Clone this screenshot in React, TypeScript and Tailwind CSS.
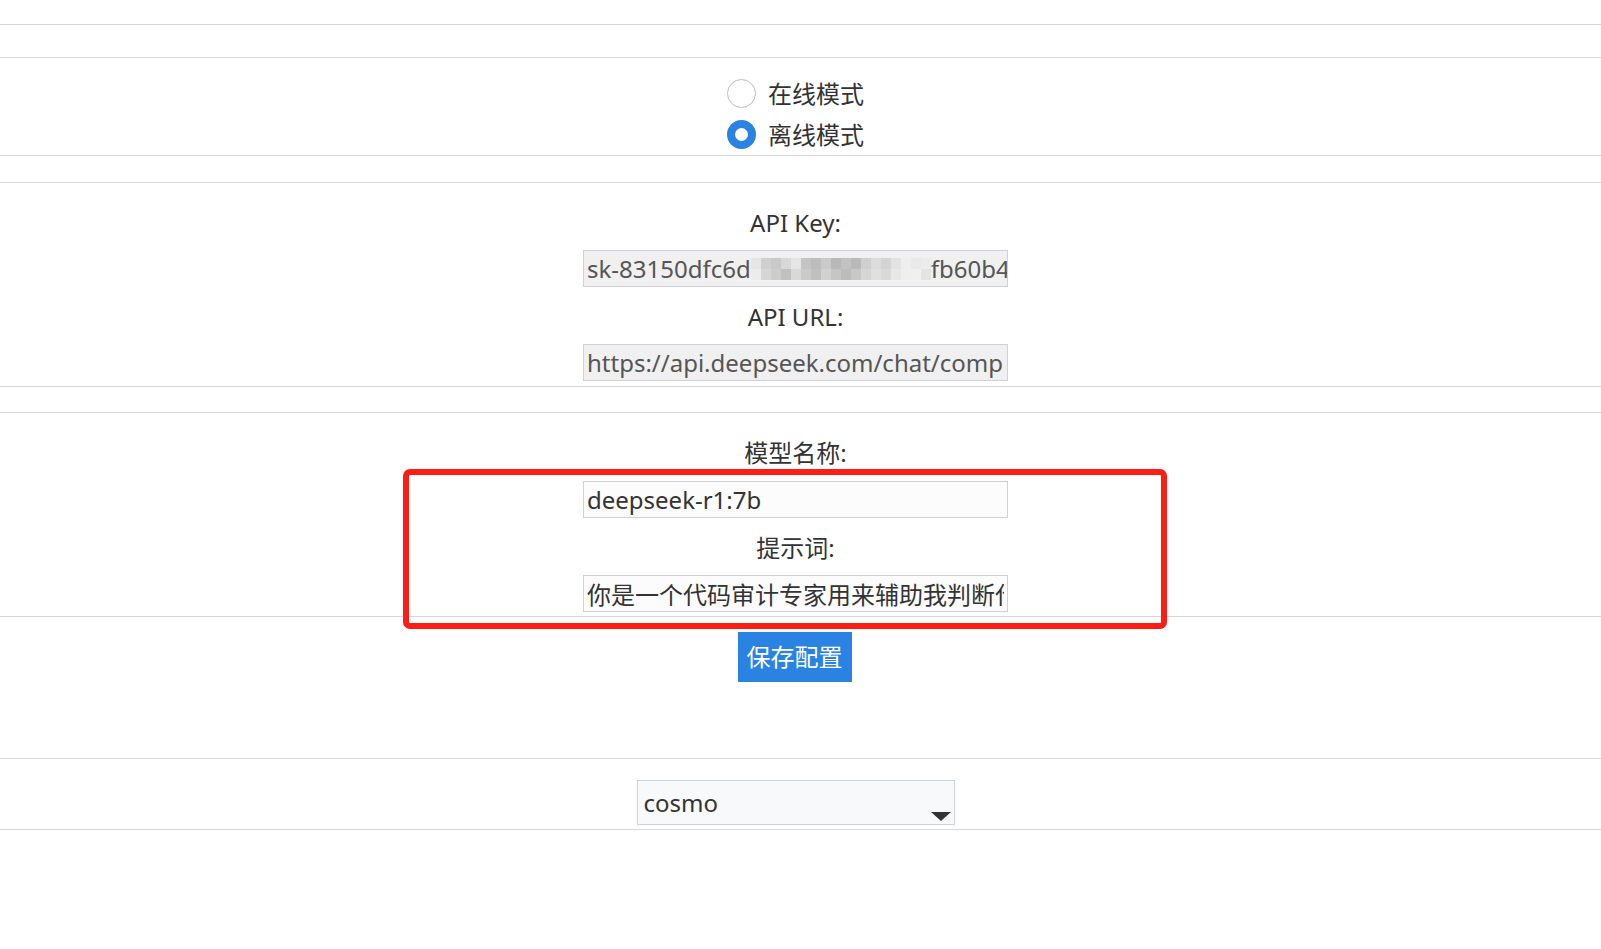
import { useState } from 'react'

const mosaic = [
  ['#e6e6e6', '#cfcfcf', '#c9c9c9', '#d8d8d8', '#e6e6e6', '#c4c4c4', '#bdbdbd', '#cacaca', '#b8b8b8', '#c2c2c2', '#b9b9b9', '#cfcfcf', '#dcdcdc', '#d4d4d4', '#e3e3e3', '#eeeeee', '#e9e9e9', '#ececec'],
  ['#ececec', '#d6d6d6', '#cdcdcd', '#c1c1c1', '#d9d9d9', '#cbcbcb', '#c0c0c0', '#d2d2d2', '#c6c6c6', '#bcbcbc', '#c8c8c8', '#d6d6d6', '#e0e0e0', '#dadada', '#e8e8e8', '#efefef', '#f0f0f0', '#e4e4e4'],
]

function Radio({ checked, label, onClick }: { checked: boolean; label: string; onClick: () => void }) {
  return (
    <label onClick={onClick} className="flex h-[41px] cursor-pointer items-center gap-[12px]">
      {checked ? (
        <span className="flex h-[29px] w-[29px] items-center justify-center rounded-full bg-[#2a82e3]">
          <span className="h-[13px] w-[13px] rounded-full bg-white" />
        </span>
      ) : (
        <span className="h-[29px] w-[29px] rounded-full border-[1.5px] border-[#bdbdbd] bg-white" />
      )}
      <span className="leading-none">{label}</span>
    </label>
  )
}

export default function App() {
  const [mode, setMode] = useState<'online' | 'offline'>('offline')
  const [model, setModel] = useState('deepseek-r1:7b')
  const [prompt, setPrompt] = useState('你是一个代码审计专家用来辅助我判断代码是否存在漏洞')

  const field = 'block h-[37px] w-[425px] border border-[#ced2d7] px-[3px] text-[24px] outline-none'

  return (
    <div className="relative min-h-screen bg-white font-['Noto_Sans','Noto_Sans_CJK_SC',sans-serif] text-[24px] text-[#333]">
      <div className="h-[25px] border-b border-[#d3d6da]" />
      <div className="h-[33px] border-b border-[#d3d6da]" />

      <div className="flex flex-col items-center border-b border-[#d3d6da] pr-[10px] pt-[15px]">
        <div className="flex flex-col">
          <Radio checked={mode === 'online'} label="在线模式" onClick={() => setMode('online')} />
          <Radio checked={mode === 'offline'} label="离线模式" onClick={() => setMode('offline')} />
        </div>
      </div>

      <div className="h-[27px] border-b border-[#d3d6da]" />

      <div className="flex flex-col items-center border-b border-[#d3d6da] pb-[5px] pr-[10px] pt-[22px]">
        <div className="leading-[36px]">API Key:</div>
        <div className="mt-[9px] flex h-[37px] w-[425px] items-center overflow-hidden whitespace-nowrap border border-[#ced2d7] bg-[#f0f0f0] px-[3px] text-[#555]">
          <span>sk-83150dfc6d</span>
          <span className="flex shrink-0 flex-col">
            {mosaic.map((row, i) => (
              <span key={i} className="flex">
                {row.map((c, j) => (
                  <span key={j} className="h-[11px] w-[10px]" style={{ background: c }} />
                ))}
              </span>
            ))}
          </span>
          <span>fb60b4</span>
        </div>
        <div className="mt-[12px] leading-[36px]">API URL:</div>
        <input
          readOnly
          value="https://api.deepseek.com/chat/completions"
          className={`${field} mt-[9px] bg-[#f0f0f0] text-[#555]`}
        />
      </div>

      <div className="h-[26px] border-b border-[#d3d6da]" />

      <div className="flex flex-col items-center border-b border-[#d3d6da] pb-[4px] pr-[10px] pt-[22px]">
        <div className="leading-[36px]">模型名称:</div>
        <input
          value={model}
          onChange={(e) => setModel(e.target.value)}
          className={`${field} mt-[10px] bg-[#fcfcfc] text-[#333]`}
        />
        <div className="mt-[12px] leading-[36px]">提示词:</div>
        <input
          value={prompt}
          onChange={(e) => setPrompt(e.target.value)}
          className={`${field} mt-[9px] bg-[#fcfcfc] text-[#333]`}
        />
      </div>

      <div className="flex h-[142px] flex-col items-center border-b border-[#d3d6da] pr-[12px] pt-[15px]">
        <button className="h-[50px] bg-[#2a82e3] px-[9px] text-[24px] leading-none text-white">保存配置</button>
      </div>

      <div className="flex flex-col items-center border-b border-[#d3d6da] pb-[4px] pr-[10px] pt-[21px]">
        <div className="relative flex h-[45px] w-[318px] items-center border border-[#ced2d7] bg-[#f8f9fa] pl-[6px]">
          <span>cosmo</span>
          <svg className="absolute bottom-[3px] right-[3px]" width="20" height="9" viewBox="0 0 20 9">
            <path d="M0 0 H20 L10 9 Z" fill="#333" />
          </svg>
        </div>
      </div>

      {/* annotation frame */}
      <div className="pointer-events-none absolute left-[403px] top-[469px] h-[160px] w-[764px] rounded-[7px] border-[6px] border-[#fa1e14]" />
    </div>
  )
}
